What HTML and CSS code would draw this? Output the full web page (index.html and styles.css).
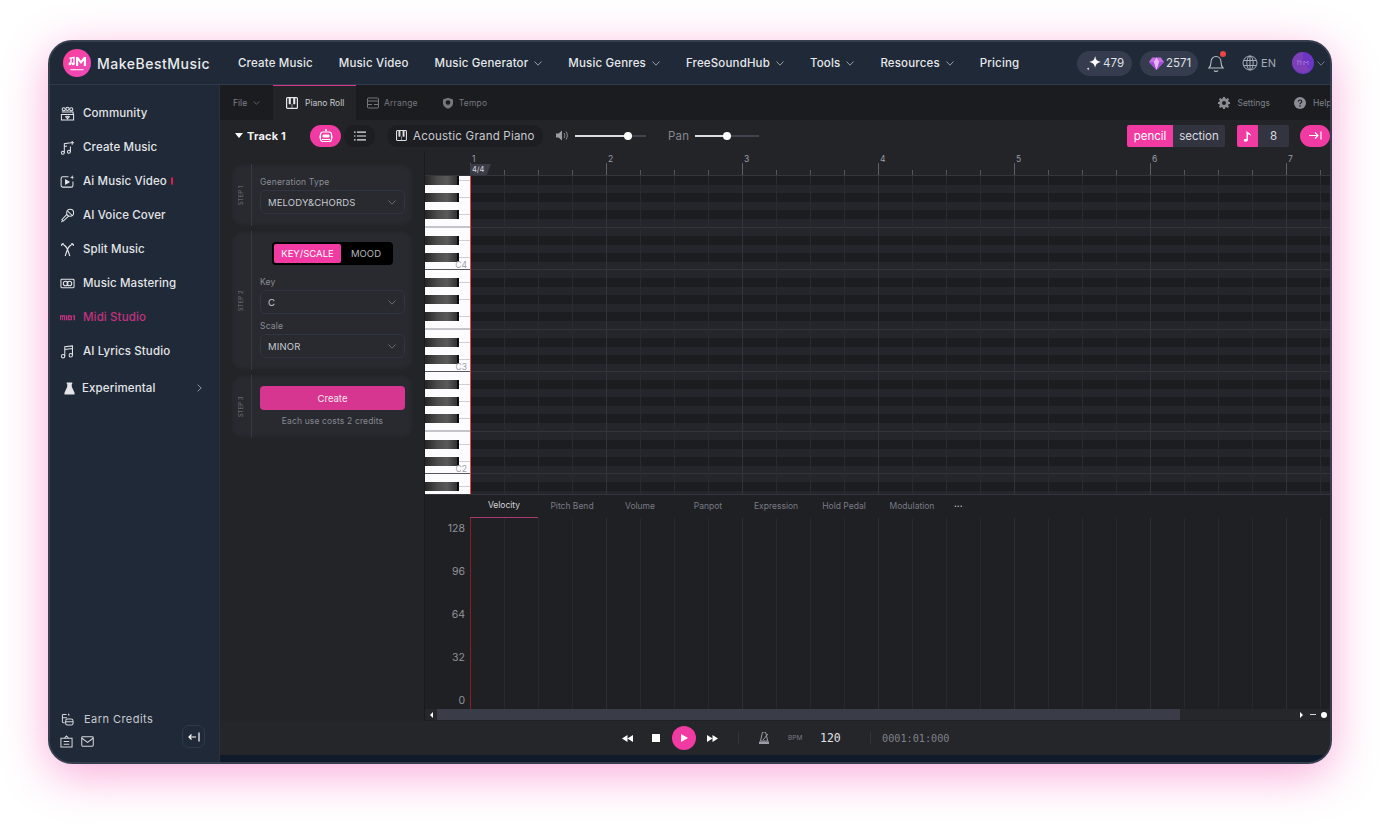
FILE: index.html
```html
<!DOCTYPE html>
<html lang="en">
<head>
<meta charset="utf-8">
<title>MakeBestMusic Midi Studio</title>
<link rel="stylesheet" href="styles.css">
</head>
<body>
<svg class="sprite" width="0" height="0">
  <symbol id="chev" viewBox="0 0 8 5"><path d="M.5.5 4 4.2 7.500.5" fill="none" stroke="currentColor" stroke-width=".9"/></symbol>
  <symbol id="keys" viewBox="0 0 12 12"><rect x=".6" y=".6" width="10.8" height="10.8" rx="1" fill="none" stroke="currentColor" stroke-width="1.2"/><path d="M3 1h1.500v6H3zM7.500 1H9v6H7.500zM6 7v4" fill="currentColor" stroke="currentColor" stroke-width=".6"/></symbol>
</svg>
<div class="window">
  <header class="topbar">
    <div class="brand">
      <svg class="logo" viewBox="0 0 28 28">
        <defs><linearGradient id="lg" x1="0" y1="0" x2="1" y2="1"><stop offset="0" stop-color="#fb3f97"/><stop offset="1" stop-color="#ec4bc0"/></linearGradient></defs>
        <circle cx="14" cy="14" r="14" fill="url(#lg)"/>
        <path d="M6.500 9.500l4.500-1.200v6.200M8 9.300v5.200" fill="none" stroke="#fff" stroke-width="1.400"/>
        <circle cx="7" cy="14.800" r="1.500" fill="#fff"/><circle cx="10.200" cy="14.800" r="1.500" fill="#fff"/>
        <path d="M13 17V8h2.200l2.800 3.800L20.800 8H23v9h-2.200v-5.500L18 15l-2.800-3.500V17z" fill="#fff"/>
        <rect x="7.500" y="20" width="13" height="1.300" fill="#ffd6ee"/>
      </svg>
      <span class="brand-name">MakeBestMusic</span>
    </div>
    <nav class="nav">
      <a class="nav-item">Create Music</a>
      <a class="nav-item">Music Video</a>
      <a class="nav-item">Music Generator<svg class="chev"><use href="#chev"/></svg></a>
      <a class="nav-item">Music Genres<svg class="chev"><use href="#chev"/></svg></a>
      <a class="nav-item">FreeSoundHub<svg class="chev"><use href="#chev"/></svg></a>
      <a class="nav-item">Tools<svg class="chev"><use href="#chev"/></svg></a>
      <a class="nav-item">Resources<svg class="chev"><use href="#chev"/></svg></a>
      <a class="nav-item">Pricing</a>
    </nav>
    <div class="account">
      <span class="pill pill-a">
        <svg class="pill-ic" viewBox="1 1 14 14"><path d="M9.500 1c.7 3.600 1.900 4.900 5.500 5.500-3.600.7-4.800 1.900-5.500 5.500-.7-3.600-1.900-4.800-5.500-5.500C7.600 5.900 8.800 4.600 9.500 1z" fill="#fff"/><path d="M3 11.500c.2 1 .5 1.300 1.500 1.500-1 .2-1.300.5-1.500 1.500-.2-1-.5-1.300-1.500-1.500 1-.2 1.300-.5 1.500-1.500z" fill="#fff"/></svg>479</span>
      <span class="pill pill-b">
        <svg class="pill-ic" viewBox="1 1 14 14"><path d="M4 2.500h8L15 6.500 8 14 1 6.500z" fill="#c66ee8"/><path d="M1 6.500h14L8 14z" fill="#a24fd8"/><path d="M5.500 6.500 8 2.500l2.500 4L8 14z" fill="#ecb6f5"/></svg>2571</span>
      <span class="bell">
        <svg viewBox="0 0 18 20" width="18" height="20"><path d="M2 15h14c-1.500-1.500-2-3-2-6 0-3-2-5.500-5-5.500S4 6 4 9c0 3-.5 4.500-2 6zM7 17.500c.6 1.200 3.400 1.200 4 0" fill="none" stroke="#b9bec8" stroke-width="1.100"/></svg>
        <i class="bell-dot"></i>
      </span>
      <span class="lang">
        <svg viewBox="0 0 16 16" width="16" height="16" fill="none" stroke="#a5abb7" stroke-width="1"><circle cx="8" cy="8" r="7"/><ellipse cx="8" cy="8" rx="3.200" ry="7"/><path d="M1.500 5.500h13M1.500 10.500h13M8 1v14"/></svg>EN</span>
      <span class="avatar">
        <svg viewBox="0 0 22 22" width="22" height="22"><circle cx="11" cy="11" r="11" fill="#6d35c4"/><path d="M0 11a11 11 0 0 1 11-11v9l7 9a11 11 0 0 1-18-7z" fill="#7c3fb8"/><path d="M5 9h4v4M6 9v4M12 13V9l2 2 2-2v4" fill="none" stroke="#a77be0" stroke-width=".8"/></svg>
      </span>
      <svg class="chev chev-dim"><use href="#chev"/></svg>
    </div>
  </header>

  <div class="body">
    <aside class="sidebar">
      <ul class="menu">
        <li class="menu-item"><svg class="mi" viewBox="0 0 16 16" fill="none" stroke="currentColor" stroke-width="1.100"><circle cx="4" cy="3.500" r="1.700"/><circle cx="8" cy="3" r="1.700"/><circle cx="12" cy="3.500" r="1.700"/><path d="M2 6.500h12v2M1.500 9h13v6h-13zM8 13.500 6 11.500c.7-.9 1.600-.6 2 0 .4-.6 1.300-.9 2 0z"/></svg>Community</li>
        <li class="menu-item"><svg class="mi" viewBox="0 0 16 16" fill="none" stroke="currentColor" stroke-width="1.100"><circle cx="3" cy="13.500" r="1.600"/><circle cx="9.500" cy="12.500" r="1.600"/><path d="M4.600 13.500V4l6.500-1M11.100 7v5.500M4.600 7l3-.5M13 1v4M11 3h4"/></svg>Create Music</li>
        <li class="menu-item"><svg class="mi" viewBox="0 0 16 16" fill="none" stroke="currentColor" stroke-width="1.100"><path d="M9 3H3a1.800 1.800 0 0 0-1.800 1.800v7.400A1.800 1.800 0 0 0 3 14h9a1.800 1.800 0 0 0 1.800-1.800V8"/><path d="M6 6.300v4.400l3.700-2.200z" fill="currentColor"/><path d="M13 1l.6 1.900 1.900.6-1.900.6-.6 1.900-.6-1.900-1.900-.6 1.900-.6z" fill="currentColor" stroke="none"/></svg>Ai Music Video<i class="new-dot"></i></li>
        <li class="menu-item"><svg class="mi" viewBox="0 0 16 16" fill="none" stroke="currentColor" stroke-width="1.100"><circle cx="10.800" cy="5" r="3.700"/><path d="M7.500 6.500 2 12.500l1.500 1.500 6-5.500M8 3l5 5M1.500 15l1-1"/></svg>AI Voice Cover</li>
        <li class="menu-item"><svg class="mi" viewBox="0 0 16 16" fill="none" stroke="currentColor" stroke-width="1.200"><path d="M2 2c3 1 5 3.500 6 6 .8 2 1.600 4.500 2.500 7M14 2c-3 1-5 3.500-6 6-.8 2-1.600 4.500-2.500 7M2 2l-.4 2.200M2 2l2.200-.2M14 2l.4 2.200M14 2l-2.200-.2"/></svg>Split Music</li>
        <li class="menu-item"><svg class="mi" viewBox="0 0 16 16" fill="none" stroke="currentColor" stroke-width="1.100"><rect x="1" y="3.500" width="14" height="9" rx="1"/><circle cx="6" cy="8" r="2.500"/><circle cx="10" cy="8" r="2.500"/></svg>Music Mastering</li>
        <li class="menu-item is-active"><svg class="mi" viewBox="0 0 16 16" fill="currentColor"><path d="M0 5.500h5.500v5.500H4.300V6.800h-1V11H2.200V6.800h-1V11H0zM6.300 5.500h1.500V11H6.300zM8.500 5.500h3.300l1 1v3.500l-1 1H8.500zm1.400 1.300v3h1.500v-3zM13.600 5.500H16V11h-1.500V6.800h-.9z"/></svg>Midi Studio</li>
        <li class="menu-item"><svg class="mi" viewBox="0 0 16 16" fill="none" stroke="currentColor" stroke-width="1.100"><circle cx="3.300" cy="13" r="1.800"/><circle cx="11.500" cy="12" r="1.800"/><path d="M5.100 13V3l8.200-1v10M5.100 5.800l8.200-1"/></svg>AI Lyrics Studio</li>
        <li class="menu-item menu-exp"><svg class="mi-exp" viewBox="0 0 12 14" fill="currentColor"><path d="M3 .5h6v1.500H8.500v3l3 6.500v2H.5v-2l3-6.500V2H3z"/></svg>Experimental<svg class="exp-chev" viewBox="0 0 5 8"><path d="M.7.7 4.200 4 .7 7.300" fill="none" stroke="currentColor" stroke-width=".9"/></svg></li>
      </ul>
      <div class="side-foot">
        <div class="foot-left">
          <div class="earn"><svg class="mi-sm" viewBox="0 0 14 14" fill="none" stroke="currentColor" stroke-width="1.100"><path d="M6 1.500H2.500a1 1 0 0 0-1 1v7a1 1 0 0 0 1 1H4M1.500 5h5M8.500 3V2a1 1 0 0 0-1-1"/><rect x="5" y="6.500" width="8" height="6.500" rx="2"/><path d="M5 9.500h8"/></svg>Earn Credits</div>
          <div class="foot-icons">
            <svg class="mi-sm" viewBox="0 0 14 14" fill="none" stroke="currentColor" stroke-width="1.100"><path d="M1 3.500h12V13H1zM4.500 3.500 7 1l2.500 2.500M4 7h6M4 10h6"/></svg>
            <svg class="mi-sm" viewBox="0 0 14 14" fill="none" stroke="currentColor" stroke-width="1.100"><rect x=".8" y="2" width="12.400" height="10" rx="1"/><path d="M1 3.500 7 8l6-4.500"/></svg>
          </div>
        </div>
        <button class="collapse"><svg viewBox="0 0 12 10" width="12" height="10" fill="none" stroke="#fff" stroke-width="1.200"><path d="M8 5H1M3.500 2.500 1 5l2.500 2.500M11 .5v9"/></svg></button>
      </div>
    </aside>

    <main class="main">
      <div class="tabs">
        <span class="tab-file">File<svg class="chev"><use href="#chev"/></svg></span>
        <span class="tab tab-on"><svg class="tab-ic" viewBox="0 0 12 12"><use href="#keys"/></svg>Piano Roll</span>
        <span class="tab tab-arr"><svg class="tab-ic" viewBox="0 0 12 12" fill="none" stroke="currentColor" stroke-width="1"><rect x=".5" y="1" width="11" height="10" rx="1"/><path d="M.5 4h11M.5 7.500H5M7 7.500h4.500"/></svg>Arrange</span>
        <span class="tab tab-tempo"><svg class="tab-ic" viewBox="0 0 12 12"><path d="M1 2.500 6 .8l5 1.700v4C11 9 8.500 10.800 6 11.800 3.500 10.800 1 9 1 6.500z" fill="currentColor"/><circle cx="6" cy="5.500" r="2.300" fill="#1b1c1f"/></svg>Tempo</span>
        <span class="tab-right"><svg class="tab-ic-l" viewBox="0 0 12 12"><path fill="currentColor" fill-rule="evenodd" d="M5 0h2l.3 1.600 1 .4L9.700 1l1.400 1.400-1 1.400.4 1L12 5v2l-1.600.3-.4 1 1 1.400-1.400 1.400-1.400-1-1 .4L7 12H5l-.3-1.600-1-.4-1.400 1L.9 9.600l1-1.400-.4-1L0 7V5l1.500-.3.4-1-1-1.300L2.300 1l1.400 1 1-.4zM6 4a2 2 0 1 0 0 4 2 2 0 0 0 0-4z"/></svg>Settings</span>
        <span class="tab-help"><svg class="tab-ic-l" viewBox="0 0 12 12"><circle cx="6" cy="6" r="6" fill="currentColor"/><path d="M4.200 4.600C4.300 3.500 5 3 6 3c1.100 0 1.800.7 1.800 1.500 0 1.300-1.800 1.300-1.800 2.700" fill="none" stroke="#1b1c1f" stroke-width="1.100"/><circle cx="6" cy="9" r=".8" fill="#1b1c1f"/></svg>Help</span>
      </div>

      <div class="toolbar">
        <i class="caret"></i><strong class="track">Track 1</strong>
        <button class="round round-pink"><svg viewBox="0 0 14 14" width="14" height="14"><path d="M7 .5v2" stroke="#fff"/><circle cx="7" cy="1" r=".9" fill="#fff"/><rect x="1.500" y="3" width="11" height="9.500" rx="2.500" fill="none" stroke="#fff" stroke-width="1.200"/><rect x="3.500" y="5.500" width="7" height="3" rx="1.200" fill="#fff"/><path d="M3 10.500h8M0 6.500v3M14 6.500v3" stroke="#fff"/></svg></button>
        <button class="round round-dark"><svg viewBox="0 0 12 10" width="12" height="10" stroke="#e6e6e6" stroke-width="1.200"><path d="M3 1.200h9M3 5h9M3 8.800h9M0 1.200h1.600M0 5h1.600M0 8.800h1.600"/></svg></button>
        <span class="instrument"><svg class="ins-ic" viewBox="0 0 12 12"><use href="#keys"/></svg>Acoustic Grand Piano</span>
        <svg class="speaker" viewBox="0 0 12 11"><path d="M0 3.500h2.500L6 .5v10L2.500 7.500H0z" fill="#9a9da5"/><path d="M8 3c1 1.300 1 3.700 0 5M10 1.500c1.800 2.400 1.800 5.600 0 8" fill="none" stroke="#9a9da5" stroke-width=".9"/></svg>
        <span class="slider slider-vol"><span class="slider-fill"></span><i class="knob"></i></span>
        <span class="pan">Pan</span>
        <span class="slider slider-pan"><span class="slider-fill"></span><i class="knob"></i></span>
        <div class="tools">
          <span class="seg"><span class="seg-on">pencil</span><span class="seg-off">section</span></span>
          <span class="seg seg-note"><span class="seg-on note-on"><svg viewBox="0 0 9 12" width="9" height="12"><path d="M3.500 9.500V.5C4.500 3 8 3 8 6 7 4.500 5.500 4.500 5 4.500v5.200C5 11 3.800 11.700 2.700 11.700 1.500 11.700.8 11 .8 10.200.8 9.200 2 8.600 3.500 9.500z" fill="#fff"/></svg></span><span class="seg-off note-num">8</span></span>
          <button class="go"><svg viewBox="0 0 13 9" width="13" height="9" fill="none" stroke="#fff" stroke-width="1.200"><path d="M0 4.500h8.500M6 1.500l3 3-3 3M12 .5v8"/></svg></button>
        </div>
      </div>

      <div class="workspace">
        <section class="panel">
          <div class="card card-1">
            <span class="step">STEP 1</span>
            <div class="card-body">
              <label class="f-label">Generation Type</label>
              <div class="select">MELODY&amp;CHORDS<svg class="chev"><use href="#chev"/></svg></div>
            </div>
          </div>
          <div class="card card-2">
            <span class="step">STEP 2</span>
            <div class="card-body">
              <div class="toggle"><span class="toggle-on">KEY/SCALE</span><span class="toggle-off">MOOD</span></div>
              <label class="f-label f-key">Key</label>
              <div class="select">C<svg class="chev"><use href="#chev"/></svg></div>
              <label class="f-label f-scale">Scale</label>
              <div class="select">MINOR<svg class="chev"><use href="#chev"/></svg></div>
            </div>
          </div>
          <div class="card card-3">
            <span class="step">STEP 3</span>
            <div class="card-body body-3">
              <button class="create">Create</button>
              <p class="cost">Each use costs 2 credits</p>
            </div>
          </div>
        </section>

        <section class="editor">
          <div class="ruler">
            <div class="bars">
              <span class="bar">1<i class="sig">4/4</i></span><span class="bar">2</span><span class="bar">3</span><span class="bar">4</span><span class="bar">5</span><span class="bar">6</span><span class="bar">7</span>
            </div>
          </div>
          <div class="roll">
            <svg class="piano" width="45" height="318" viewBox="0 0 45 318">
              <defs>
                <linearGradient id="bk"><stop offset="0" stop-color="#262626"/><stop offset=".35" stop-color="#4a4a4a"/><stop offset=".65" stop-color="#5a5a5a"/><stop offset=".93" stop-color="#333"/><stop offset=".94" stop-color="#0c0c0c"/><stop offset="1" stop-color="#0c0c0c"/></linearGradient>
                <pattern id="oct" width="45" height="102" patternUnits="userSpaceOnUse">
                  <rect width="45" height="102" fill="#fcfcff"/>
                  <path d="M34 4.500h11M34 21.500h11M34 38.500h11M34 64.500h11M34 81.500h11" stroke="#cfcfd4"/>
                  <path d="M0 51h45" stroke="#8b8d96"/><path d="M0 93.500h45" stroke="#55575f"/>
                  <rect width="34" height="9" fill="url(#bk)"/><rect y="17" width="34" height="9" fill="url(#bk)"/><rect y="34" width="34" height="9" fill="url(#bk)"/><rect y="60" width="34" height="9" fill="url(#bk)"/><rect y="77" width="34" height="9" fill="url(#bk)"/>
                </pattern>
              </defs>
              <rect width="45" height="318" fill="url(#oct)"/>
              <text class="oct-label" x="42" y="92">C4</text><text class="oct-label" x="42" y="194">C3</text><text class="oct-label" x="42" y="296">C2</text>
            </svg>
            <div class="grid"></div>
          </div>
          <div class="lane-tabs">
            <span class="lane lane-on">Velocity</span><span class="lane">Pitch Bend</span><span class="lane">Volume</span><span class="lane">Panpot</span><span class="lane">Expression</span><span class="lane">Hold Pedal</span><span class="lane">Modulation</span><span class="lane-more">···</span>
          </div>
          <div class="velocity">
            <div class="axis"><span>128</span><span>96</span><span>64</span><span>32</span><span>0</span></div>
            <div class="vel-grid"></div>
          </div>
          <div class="scroll">
            <i class="arrow-l"></i><span class="thumb"></span><i class="arrow-r"></i><i class="minus"></i><i class="dot"></i>
          </div>
        </section>
      </div>

      <footer class="transport">
        <svg class="t-rew" viewBox="0 0 11 7" width="11" height="7" fill="#fff"><path d="M5.500 0v7L0 3.500zM11 0v7L5.500 3.500z"/></svg>
        <i class="t-stop"></i>
        <button class="t-play"><svg viewBox="0 0 7 8" width="7" height="8"><path d="M0 0v8l7-4z" fill="#fff"/></svg></button>
        <svg class="t-ff" viewBox="0 0 11 7" width="11" height="7" fill="#fff"><path d="M0 0v7l5.500-3.500zM5.500 0v7L11 3.500z"/></svg>
        <i class="t-sep"></i>
        <svg class="t-met" viewBox="0 0 11 12" width="11" height="12"><path d="M3.500 0h3l2.300 9H1.500z" fill="none" stroke="#9a9da5"/><path d="M0 9.500h10V12H0z" fill="#9a9da5"/><path d="M4 8l5-6" stroke="#9a9da5"/></svg>
        <span class="t-bpm">BPM</span>
        <span class="t-val">120</span>
        <i class="t-sep t-sep2"></i>
        <span class="t-time">0001:01:000</span>
      </footer>
      <div class="strip"></div>
    </main>
  </div>
</div>
</body>
</html>
```
FILE: styles.css
```css
* { box-sizing: border-box; }
html, body { margin: 0; height: 100%; background: #fff; }
body { font-family: Inter, "Liberation Sans", sans-serif; color: #e8e9ec; overflow: hidden; }
.sprite { position: absolute; }
i { display: block; }
button { border: 0; padding: 0; font: inherit; color: inherit; }

.window {
  width: 1284px; height: 724px; margin: 40px 48px;
  border: 2px solid #373e50; border-radius: 24px;
  overflow: hidden; display: flex; flex-direction: column;
  background: #1f2937;
  box-shadow: 0 11px 46px rgba(244, 64, 170, .44);
}

/* top bar */
.topbar { height: 43px; flex: none; display: flex; align-items: center; background: #1f2937; border-bottom: 1px solid #2f3b4d; padding-left: 13px; }
.brand { display: flex; align-items: center; width: 175px; }
.logo { width: 28px; height: 28px; margin-right: 6px; }
.brand-name { font-size: 14px; font-weight: 500; letter-spacing: .5px; color: #e9ebee; }
.nav { display: flex; gap: 26px; }
.nav-item { display: flex; align-items: center; font-size: 11.500px; font-weight: 500; letter-spacing: .16px; color: #e6e8eb; white-space: nowrap; }
.chev { width: 8px; height: 5px; margin-left: 6px; color: #a6abb5; flex: none; }
.account { margin-left: auto; display: flex; align-items: center; padding-right: 5px; }
.pill { display: flex; align-items: center; height: 25px; border-radius: 13px; background: #343c4e; font-size: 11.500px; color: #dfe1e6; }
.pill-a { width: 55px; padding-left: 9px; }
.pill-b { width: 58px; margin-left: 8px; padding-left: 9px; }
.pill-ic { width: 15px; height: 15px; margin-right: 2px; }
.bell { position: relative; margin-left: 9px; width: 18px; height: 20px; }
.bell-dot { position: absolute; right: -1px; top: -2px; width: 6px; height: 6px; border-radius: 50%; background: #ef4444; }
.lang { display: flex; align-items: center; gap: 3px; margin-left: 17px; font-size: 11px; color: #a5abb7; }
.avatar { margin-left: 16px; width: 22px; height: 22px; }
.chev-dim { margin-left: 3px; color: #7d8490; }

/* body */
.body { flex: 1; display: flex; min-height: 0; }

/* sidebar */
.sidebar { width: 170px; flex: none; background: #1f2937; border-right: 1px solid #2a3040; display: flex; flex-direction: column; padding: 11px 0 0 10px; }
.menu { list-style: none; margin: 0; padding: 0; }
.menu-item { height: 34px; display: flex; align-items: center; font-size: 11.500px; font-weight: 500; letter-spacing: .12px; color: #e3e5e9; white-space: nowrap; }
.mi { width: 15px; height: 15px; margin-right: 8px; flex: none; color: #e3e5e9; }
.is-active, .is-active .mi { color: #c3327f; }
.new-dot { width: 2px; height: 8px; margin-left: 4px; border-radius: 4px 0 0 4px; background: #e11d48; }
.menu-exp { margin-top: 3px; padding-left: 4px; }
.mi-exp { width: 11px; height: 13px; margin-right: 7px; color: #e3e5e9; }
.exp-chev { width: 5px; height: 8px; margin-left: 42px; color: #9ba1ab; }
.side-foot { margin-top: auto; display: flex; justify-content: space-between; padding: 0 14px 14px 0; align-items: flex-end; }
.earn { display: flex; align-items: center; padding-left: 1px; font-size: 11px; letter-spacing: .45px; color: #c8ccd2; }
.mi-sm { width: 13px; height: 13px; color: #d5d8dd; flex: none; }
.earn .mi-sm { margin-right: 10px; }
.foot-icons { display: flex; gap: 8px; margin-top: 9px; }
.collapse { width: 23px; height: 23px; border: 1px solid #2f3a4c; border-radius: 7px; background: #1f2937; display: flex; align-items: center; justify-content: center; }

/* main */
.main { width: 1110px; flex: none; display: flex; flex-direction: column; overflow: hidden; background: #232428; }
.tabs { height: 35px; flex: none; display: flex; align-items: stretch; background: #1b1c1f; font-size: 8.500px; color: #7e8188; white-space: nowrap; }
.tab-file { display: flex; align-items: center; width: 40px; margin-left: 13px; }
.tab-file .chev { width: 7px; height: 4px; margin-left: 6px; color: #74777e; }
.tab { display: flex; align-items: center; padding: 0 12px; letter-spacing: .2px; color: #74777e; }
.tab-arr { padding-left: 11px; }
.tab-on { background: #232428; border-top: 1px solid #d6368f; color: #c8cad0; width: 83px; padding: 0 0 0 13px; letter-spacing: 0; }
.tab-ic { width: 12px; height: 12px; margin-right: 5px; flex: none; }
.tab-on .tab-ic { margin-right: 7px; color: #e8e8ea; }
.tab-right { margin-left: auto; display: flex; align-items: center; }
.tab-help { display: flex; align-items: center; margin-left: 24px; width: 36px; overflow: hidden; }
.tab-ic-l { width: 12px; height: 12px; margin-right: 7px; color: #8a8d94; flex: none; }

.toolbar { height: 31px; flex: none; display: flex; align-items: center; background: #232428; }
.caret { margin-left: 15px; width: 0; height: 0; border: 4.500px solid transparent; border-top: 5px solid #fff; border-bottom: 0; }
.track { margin-left: 4px; width: 63px; font-size: 11px; font-weight: 700; letter-spacing: .2px; color: #f1f1f3; }
.round { width: 31px; height: 22px; border-radius: 11px; display: flex; align-items: center; justify-content: center; }
.round-pink { background: #f13ba2; }
.round-dark { background: #1d1e22; margin-left: 3px; }
.instrument { margin-left: 12px; width: 156px; height: 22px; border-radius: 11px; background: #1d1e22; display: flex; align-items: center; padding-left: 9px; font-size: 11.500px; letter-spacing: .22px; color: #c9cbd0; white-space: nowrap; }
.ins-ic { width: 11px; height: 11px; margin-right: 6px; color: #dcdde0; }
.speaker { width: 12px; height: 11px; margin-left: 13px; }
.slider { position: relative; display: block; height: 2px; background: #41444e; }
.slider-fill { display: block; height: 2px; background: #dcdde0; }
.knob { position: absolute; top: -3px; width: 8px; height: 8px; border-radius: 50%; background: #fff; }
.slider-vol { width: 71px; margin-left: 7px; }
.slider-vol .slider-fill { width: 53px; }
.slider-vol .knob { left: 49px; }
.pan { margin-left: 22px; width: 27px; font-size: 11.500px; letter-spacing: .2px; color: #85888f; }
.slider-pan { width: 64px; }
.slider-pan .slider-fill { width: 32px; }
.slider-pan .knob { left: 28px; }
.tools { margin-left: auto; display: flex; align-items: center; }
.seg { display: flex; height: 22px; border-radius: 2px; overflow: hidden; font-size: 11.500px; }
.seg-on { display: flex; align-items: center; justify-content: center; width: 46px; background: #f13ba2; color: #fff; }
.seg-off { display: flex; align-items: center; justify-content: center; width: 52px; background: #32353f; color: #dcdde0; }
.seg-note { margin-left: 12px; }
.note-on { width: 21px; }
.note-num { width: 31px; }
.go { margin-left: 11px; width: 30px; height: 22px; border-radius: 11px; background: #f13ba2; display: flex; align-items: center; justify-content: center; }

/* workspace */
.workspace { flex: 1; min-height: 0; display: flex; }
.panel { width: 205px; flex: none; border-right: 1px solid #1a1b1e; padding: 13px 11px 0; display: flex; flex-direction: column; gap: 5px; background: #232428; }
.card { display: flex; border-radius: 10px; background: #282a30; box-shadow: inset 0 0 4px rgba(0,0,0,.25); }
.step { width: 21px; flex: none; display: flex; align-items: center; justify-content: center; writing-mode: vertical-rl; transform: rotate(180deg); border-left: 1px solid #343945; font-size: 5.500px; letter-spacing: .3px; color: #787b83; }
.card-body { flex: 1; padding: 12px 8px; display: flex; flex-direction: column; }
.f-label { display: block; height: 12px; line-height: 12px; margin-bottom: 2px; font-size: 8.500px; letter-spacing: .2px; color: #8b8e95; }
.select { height: 24px; flex: none; display: flex; align-items: center; justify-content: space-between; padding: 0 8px 0 7px; border: 1px solid #2f3543; border-radius: 5px; font-size: 9.500px; letter-spacing: .15px; color: #c9cbd0; }
.select .chev { color: #71757e; }
.toggle { align-self: center; margin-top: -1px; display: flex; height: 23px; padding: 2px; border-radius: 4px; background: #000; font-size: 9.500px; }
.toggle-on { width: 67px; display: flex; align-items: center; justify-content: center; border-radius: 2px; background: #f13ba2; color: #fff; }
.toggle-off { width: 50px; display: flex; align-items: center; justify-content: center; color: #b4b6bb; }
.f-key { margin-top: 11px; }
.f-scale { margin-top: 6px; }
.body-3 { padding-top: 11px; }
.create { height: 24px; flex: none; border-radius: 4px; background: #d6368f; color: #f5e6ef; font-size: 9.500px; }
.cost { margin: 6px 0 0; text-align: center; font-size: 8.500px; letter-spacing: .15px; color: #85888f; white-space: nowrap; }

/* editor */
.editor { flex: 1; min-width: 0; display: flex; flex-direction: column; overflow: hidden; }
.ruler { height: 25px; flex: none; padding-left: 45px; background: #232428; border-bottom: 1px solid #35363d; overflow: hidden; }
.bars { display: flex; height: 24px; }
.bar {
  position: relative; flex: none; width: 136px; padding: 3px 0 0 2px;
  font-size: 8.500px; line-height: 10px; color: #9a9da5;
  background:
    linear-gradient(#60626a, #60626a) 0 100% / 1px 12px no-repeat,
    linear-gradient(90deg, #55575e 1px, transparent 1px) 0 100% / 34px 5px repeat-x;
}
.sig { position: absolute; left: 0; bottom: 0; width: 21px; height: 11px; padding-left: 2px; font-style: normal; font-size: 7.500px; line-height: 11px; color: #d8d9dd; background: #3a3d47; clip-path: polygon(0 0, 100% 0, 80% 100%, 0 100%); }
.roll { height: 318px; flex: none; display: flex; }
.piano { display: block; flex: none; }
.oct-label { font-size: 8.500px; fill: #9ea0a6; text-anchor: end; }
.grid {
  flex: 1; border-left: 1px solid #ef4444; background-origin: border-box;
  background-image:
    linear-gradient(90deg, #33343b 1px, transparent 1px),
    linear-gradient(90deg, #2a2b31 1px, transparent 1px),
    repeating-linear-gradient(180deg,
      #1c1d20 0 9px, #25262b 9px 17px, #1c1d20 17px 26px, #25262b 26px 34px, #1c1d20 34px 43px,
      #25262b 43px 51px, #33343c 51px 52px, #25262b 52px 60px, #1c1d20 60px 69px, #25262b 69px 77px,
      #1c1d20 77px 86px, #25262b 86px 93px, #33343c 93px 94px, #25262b 94px 102px);
  background-size: 136px 100%, 34px 100%, 100% 100%;
}
.lane-tabs { height: 24px; flex: none; display: flex; padding-left: 45px; border-top: 1px solid #35363d; background: #1f2024; font-size: 8.500px; color: #787b83; }
.lane { width: 68px; padding-bottom: 2px; display: flex; align-items: center; justify-content: center; white-space: nowrap; }
.lane-on { color: #d5d6da; border-bottom: 1px solid #a8386f; }
.lane-more { margin-left: 8px; padding-bottom: 2px; display: flex; align-items: center; font-weight: 700; color: #b4b6bb; }
.velocity { flex: 1; min-height: 0; display: flex; background: #1f2024; }
.axis { width: 45px; flex: none; padding: 3px 5px 2px 0; display: flex; flex-direction: column; justify-content: space-between; align-items: flex-end; font-size: 10.500px; line-height: 14px; color: #909399; transform: translateY(1px); }
.vel-grid {
  flex: 1; border-left: 1px solid #8f1d27; background-origin: border-box;
  background-image:
    linear-gradient(90deg, #2e2f36 1px, transparent 1px),
    linear-gradient(90deg, #28292f 1px, transparent 1px);
  background-size: 136px 100%, 34px 100%;
}
.scroll { height: 12px; flex: none; display: flex; align-items: center; background: #26272b; border-bottom: 1px solid #1f2024; padding-left: 5px; }
.arrow-l { width: 0; height: 0; border: 3px solid transparent; border-right: 3px solid #fff; border-left: 0; }
.thumb { display: block; margin-left: 4px; width: 743px; height: 11px; background: #3a3d47; }
.arrow-r { margin-left: 120px; width: 0; height: 0; border: 3px solid transparent; border-left: 3px solid #fff; border-right: 0; }
.minus { margin-left: 7px; width: 6px; height: 1px; background: #d5d6da; }
.dot { margin-left: 5px; width: 6px; height: 6px; border-radius: 50%; background: #fff; }

/* transport */
.transport { height: 34px; flex: none; display: flex; align-items: center; padding-left: 402px; background: #25262a; }
.t-stop { margin-left: 19px; width: 8px; height: 8px; background: #fff; }
.t-play { margin-left: 12px; width: 24px; height: 24px; border-radius: 50%; background: #f13ba2; display: flex; align-items: center; justify-content: center; }
.t-ff { margin-left: 11px; }
.t-sep { margin-left: 20px; width: 1px; height: 12px; background: #34353b; }
.t-met { margin-left: 20px; }
.t-bpm { margin-left: 18px; font-size: 6.500px; color: #787b83; width: 15px; }
.t-val { margin-left: 17px; width: 48px; font-family: "DejaVu Sans Mono", monospace; font-size: 11.500px; color: #e0e1e4; }
.t-sep2 { margin-left: 2px; }
.t-time { margin-left: 11px; font-family: "DejaVu Sans Mono", monospace; font-size: 10.200px; color: #7e8188; }
.strip { height: 7px; flex: none; background: #0f1a2b; }
```
